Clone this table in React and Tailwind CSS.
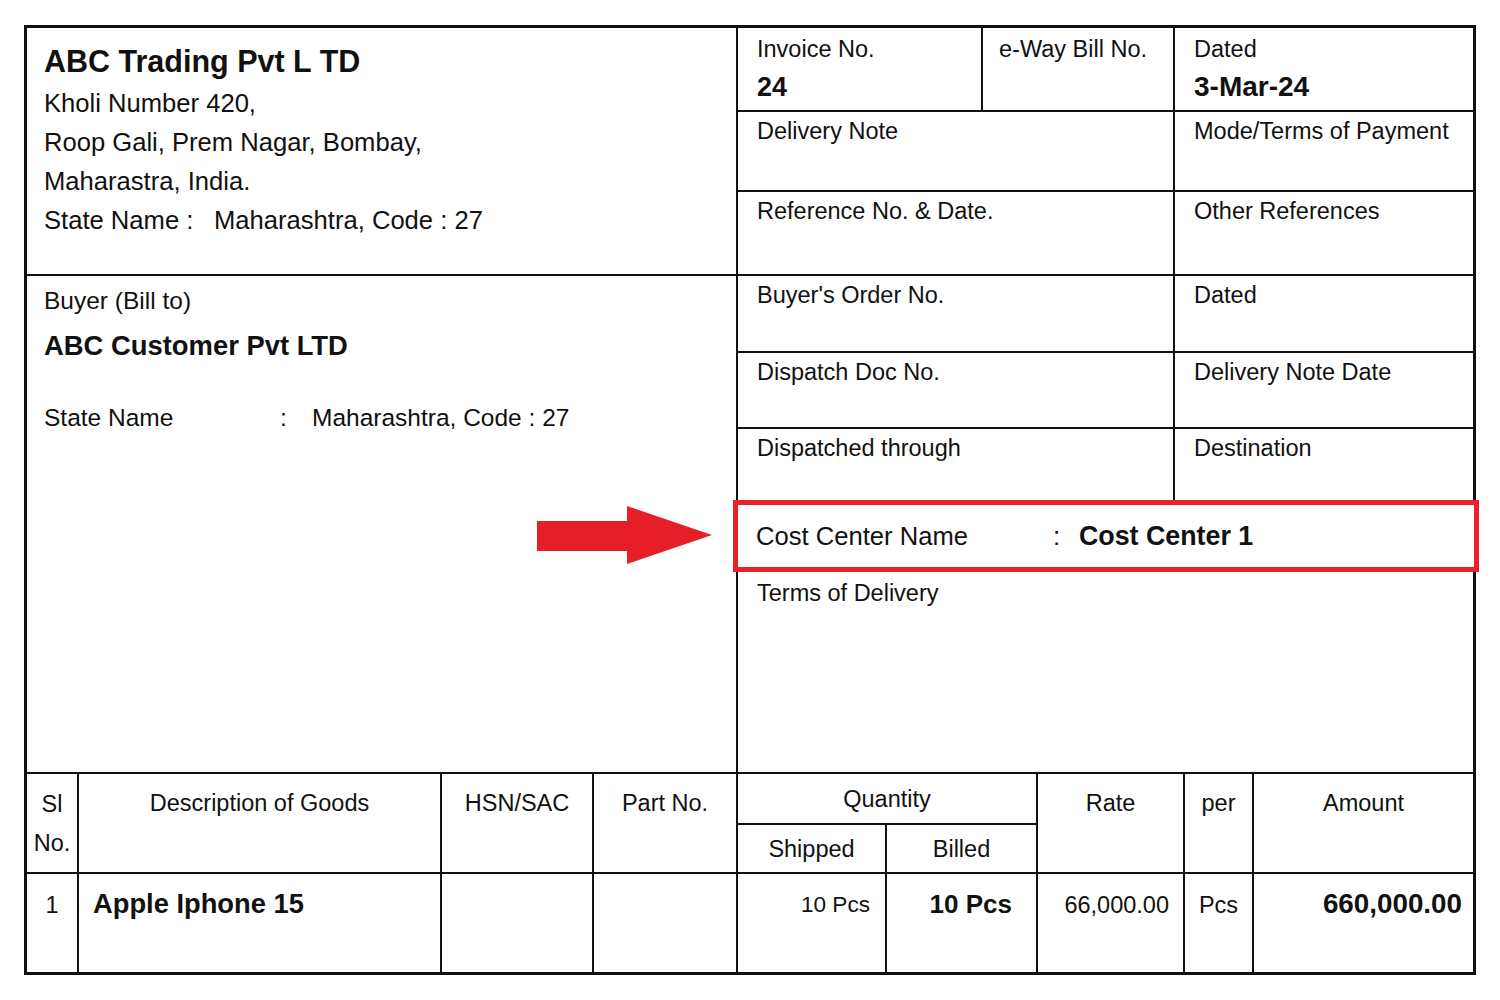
import React from "react"

const font = { fontFamily: '"Liberation Sans", Arial, sans-serif' }

function Cell({ label, className = "", children }) {
    return (
        <div className={"pl-[19px] pt-[4px] " + className}>
            <div className="text-[23.5px] leading-[30px]">{label}</div>
            {children}
        </div>
    )
}

function Arrow() {
    return (
        <svg
            className="absolute left-[510px] top-[477px] z-20"
            width="180"
            height="62"
            viewBox="0 0 180 62"
        >
            <rect x="0" y="16" width="92" height="30" fill="#e61e27" />
            <polygon points="90,1 175,30 90,59" fill="#e61e27" />
        </svg>
    )
}

export default function App() {
    return (
        <div className="min-h-screen bg-white pt-[25px] pl-[24px] text-[#111]" style={font}>
            <div className="relative flex h-[950px] w-[1452px] flex-col border-[3px] border-[#111]">
                <Arrow />
                {/* upper half */}
                <div className="flex h-[744px]">
                    {/* left column */}
                    <div className="flex w-[711px] flex-col border-r-2 border-[#111]">
                        <div className="h-[248px] border-b-2 border-[#111] pl-[17px] pt-[10px] text-[25.6px] leading-[39px]">
                            <div className="text-[30.5px] font-bold leading-[46px]">ABC Trading Pvt L TD</div>
                            <div>Kholi Number 420,</div>
                            <div>Roop Gali, Prem Nagar, Bombay,</div>
                            <div>Maharastra, India.</div>
                            <div className="flex">
                                <span className="w-[170px]">State Name :</span>
                                <span>Maharashtra, Code : 27</span>
                            </div>
                        </div>
                        <div className="flex-1 pl-[17px] pt-[8px] text-[24.5px]">
                            <div className="leading-[34px]">Buyer (Bill to)</div>
                            <div className="mt-[11px] text-[27.4px] font-bold leading-[34px]">ABC Customer Pvt LTD</div>
                            <div className="mt-[38px] flex leading-[34px]">
                                <span className="w-[236px]">State Name</span>
                                <span className="w-[32px]">:</span>
                                <span>Maharashtra, Code : 27</span>
                            </div>
                        </div>
                    </div>

                    {/* right column */}
                    <div className="flex flex-1 flex-col">
                        <div className="flex h-[84px] border-b-2 border-[#111]">
                            <Cell label="Invoice No." className="w-[245px] border-r-2 border-[#111] pt-[6px]">
                                <div className="mt-[6px] text-[27px] font-bold leading-[34px]">24</div>
                            </Cell>
                            <Cell label="e-Way Bill No." className="w-[192px] border-r-2 border-[#111] !pl-[16px] pt-[6px]" />
                            <Cell label="Dated" className="flex-1 !pl-[19px] pt-[6px]">
                                <div className="mt-[6px] text-[28px] font-bold leading-[34px]">3-Mar-24</div>
                            </Cell>
                        </div>
                        <div className="flex h-[80px] border-b-2 border-[#111]">
                            <Cell label="Delivery Note" className="w-[437px] border-r-2 border-[#111]" />
                            <Cell label="Mode/Terms of Payment" className="flex-1" />
                        </div>
                        <div className="flex h-[84px] border-b-2 border-[#111]">
                            <Cell label="Reference No. & Date." className="w-[437px] border-r-2 border-[#111]" />
                            <Cell label="Other References" className="flex-1" />
                        </div>
                        <div className="flex h-[77px] border-b-2 border-[#111]">
                            <Cell label="Buyer's Order No." className="w-[437px] border-r-2 border-[#111]" />
                            <Cell label="Dated" className="flex-1" />
                        </div>
                        <div className="flex h-[76px] border-b-2 border-[#111]">
                            <Cell label="Dispatch Doc No." className="w-[437px] border-r-2 border-[#111]" />
                            <Cell label="Delivery Note Date" className="flex-1" />
                        </div>
                        <div className="flex h-[71px]">
                            <Cell label="Dispatched through" className="w-[437px] border-r-2 border-[#111]" />
                            <Cell label="Destination" className="flex-1" />
                        </div>
                        {/* highlighted row */}
                        <div className="relative z-10 -ml-[5px] -mr-[6px] flex h-[72px] items-center border-[5px] border-[#e8202a] bg-white pl-[18px]">
                            <span className="w-[297px] text-[25.6px]">Cost Center Name</span>
                            <span className="w-[26px] text-[25.6px]">:</span>
                            <span className="text-[26.8px] font-bold">Cost Center 1</span>
                        </div>
                        <Cell label="Terms of Delivery" className="flex-1 pt-[6px]" />
                    </div>
                </div>

                {/* items table */}
                <div className="grid grid-cols-[52px_363px_152px_144px_149px_151px_147px_69px_219px] grid-rows-[51px_49px_1fr] flex-1 border-t-2 border-[#111] text-[23.5px]">
                    <div className="row-span-2 border-r-2 border-b-2 border-[#111] pt-[11px] text-center leading-[39px]">
                        Sl
                        <br />
                        No.
                    </div>
                    <div className="row-span-2 border-r-2 border-b-2 border-[#111] pt-[14px] text-center leading-[30px]">Description of Goods</div>
                    <div className="row-span-2 border-r-2 border-b-2 border-[#111] pt-[14px] text-center leading-[30px]">HSN/SAC</div>
                    <div className="row-span-2 border-r-2 border-b-2 border-[#111] pt-[14px] text-center leading-[30px]">Part No.</div>
                    <div className="col-span-2 border-r-2 border-b-2 border-[#111] pt-[10px] text-center leading-[30px]">Quantity</div>
                    <div className="row-span-2 border-r-2 border-b-2 border-[#111] pt-[14px] text-center leading-[30px]">Rate</div>
                    <div className="row-span-2 border-r-2 border-b-2 border-[#111] pt-[14px] text-center leading-[30px]">per</div>
                    <div className="row-span-2 border-b-2 border-[#111] pt-[14px] text-center leading-[30px]">Amount</div>
                    <div className="border-r-2 border-b-2 border-[#111] pt-[9px] text-center leading-[30px]">Shipped</div>
                    <div className="border-r-2 border-b-2 border-[#111] pt-[9px] text-center leading-[30px]">Billed</div>

                    <div className="border-r-2 border-[#111] pt-[16px] text-center leading-[30px]">1</div>
                    <div className="border-r-2 border-[#111] pl-[14px] pt-[15px] text-[27.3px] font-bold leading-[30px]">Apple Iphone 15</div>
                    <div className="border-r-2 border-[#111]" />
                    <div className="border-r-2 border-[#111]" />
                    <div className="border-r-2 border-[#111] pr-[15px] pt-[16px] text-right text-[22.6px] leading-[30px]">10 Pcs</div>
                    <div className="border-r-2 border-[#111] pr-[24px] pt-[15px] text-right text-[26px] font-bold leading-[30px]">10 Pcs</div>
                    <div className="border-r-2 border-[#111] pr-[14px] pt-[16px] text-right leading-[30px]">66,000.00</div>
                    <div className="border-r-2 border-[#111] pt-[16px] text-center leading-[30px]">Pcs</div>
                    <div className="pr-[11px] pt-[15px] text-right text-[27.8px] font-bold leading-[30px]">660,000.00</div>
                </div>
            </div>
        </div>
    )
}
